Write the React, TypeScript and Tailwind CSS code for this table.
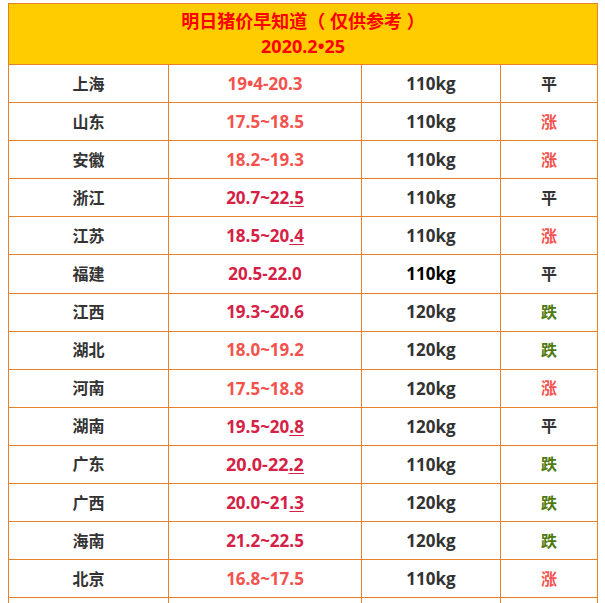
const rows = [
  { city: "上海", range: "19•4-20.3", rangeTone: "light", weight: "110kg", trend: "平" },
  { city: "山东", range: "17.5~18.5", rangeTone: "light", weight: "110kg", trend: "涨" },
  { city: "安徽", range: "18.2~19.3", rangeTone: "light", weight: "110kg", trend: "涨" },
  { city: "浙江", range: "20.7~22", tail: ".5", rangeTone: "dark", weight: "110kg", trend: "平" },
  { city: "江苏", range: "18.5~20", tail: ".4", rangeTone: "dark", weight: "110kg", trend: "涨" },
  { city: "福建", range: "20.5-22.0", rangeTone: "dark", weight: "110kg", trend: "平", strong: true },
  { city: "江西", range: "19.3~20.6", rangeTone: "dark", weight: "120kg", trend: "跌" },
  { city: "湖北", range: "18.0~19.2", rangeTone: "light", weight: "120kg", trend: "跌" },
  { city: "河南", range: "17.5~18.8", rangeTone: "light", weight: "120kg", trend: "涨" },
  { city: "湖南", range: "19.5~20", tail: ".8", rangeTone: "dark", weight: "120kg", trend: "平" },
  { city: "广东", range: "20.0-22", tail: ".2", rangeTone: "dark", weight: "110kg", trend: "跌", big: true },
  { city: "广西", range: "20.0~21", tail: ".3", rangeTone: "dark", weight: "120kg", trend: "跌" },
  { city: "海南", range: "21.2~22.5", rangeTone: "dark", weight: "120kg", trend: "跌" },
  { city: "北京", range: "16.8~17.5", rangeTone: "light", weight: "110kg", trend: "涨" },
];

const trendColor: Record<string, string> = {
  平: "text-[#333333]",
  涨: "text-[#f4524d]",
  跌: "text-[#4f7a0e]",
};

const cell = "border border-[#e8822a] text-center font-bold";

export default function App() {
  return (
    <div
      className="w-[605px] h-[603px] overflow-hidden bg-white pl-2 pt-[3px]"
      style={{ fontFamily: '"Open Sans", "Noto Sans CJK SC", sans-serif' }}
    >
      <table className="w-[589px] border-collapse table-fixed">
        <colgroup>
          <col className="w-[160px]" />
          <col className="w-[193px]" />
          <col className="w-[139px]" />
          <col className="w-[97px]" />
        </colgroup>
        <thead>
          <tr className="h-[61px]">
            <th
              colSpan={4}
              className={`${cell} bg-[#ffcc00] text-[#ff0000] text-[18px] leading-[25px]`}
            >
              <div>明日猪价早知道（ 仅供参考 ）</div>
              <div>2020.2•25</div>
            </th>
          </tr>
        </thead>
        <tbody>
          {rows.map((r) => (
            <tr key={r.city} className="h-[38.1px]">
              <td className={`${cell} text-[16px] text-[#333333]`}>{r.city}</td>
              <td
                className={`${cell} ${r.big ? "text-[18px]" : "text-[17px]"} ${
                  r.rangeTone === "dark" ? "text-[#d42145]" : "text-[#f4524d]"
                }`}
              >
                {r.range}
                {r.tail && <span className="underline underline-offset-2">{r.tail}</span>}
              </td>
              <td className={`${cell} text-[17px] ${r.strong ? "text-black" : "text-[#333333]"}`}>
                {r.weight}
              </td>
              <td className={`${cell} text-[16px] ${trendColor[r.trend]}`}>{r.trend}</td>
            </tr>
          ))}
          {/* next row, cut off by the screenshot */}
          <tr className="h-[38px]" aria-hidden="true">
            <td className={cell}></td>
            <td className={cell}></td>
            <td className={cell}></td>
            <td className={cell}></td>
          </tr>
        </tbody>
      </table>
    </div>
  );
}
